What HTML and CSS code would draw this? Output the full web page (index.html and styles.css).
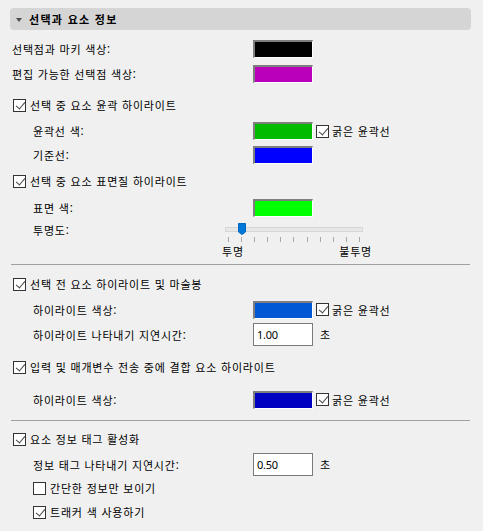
FILE: index.html
```html
<!DOCTYPE html>
<html lang="ko">
<head>
<meta charset="utf-8">
<title>선택과 요소 정보</title>
<link rel="stylesheet" href="styles.css">
</head>
<body>
<div class="panel">
  <div class="header"><span class="arrow"></span><span class="title">선택과 요소 정보</span></div>

  <div class="row tall mt6"><span class="label">선택점과 마키 색상:</span><span class="swatch" style="background:#000000"></span></div>
  <div class="row tall"><span class="label">편집 가능한 선택점 색상:</span><span class="swatch" style="background:#bb00bb"></span></div>

  <div class="check mt7"><span class="box on"></span><span>선택 중 요소 윤곽 하이라이트</span></div>
  <div class="row mt2"><span class="label sub">윤곽선 색:</span><span class="swatch" style="background:#00bb00"></span><span class="check inline"><span class="box on"></span><span>굵은 윤곽선</span></span></div>
  <div class="row"><span class="label sub">기준선:</span><span class="swatch" style="background:#0000ff"></span></div>

  <div class="check mt2"><span class="box on"></span><span>선택 중 요소 표면질 하이라이트</span></div>
  <div class="row tall mt2"><span class="label sub">표면 색:</span><span class="swatch" style="background:#00ff00"></span></div>
  <div class="slider-row mt3">
    <span class="label sub slabel">투명도:</span>
    <div class="slider">
      <div class="track-wrap"><div class="track"></div><div class="thumb"><svg width="8" height="12" viewBox="0 0 8 12"><path d="M0.5 0.5 H7.5 V9 L4 11.5 L0.5 9 Z" fill="#0078d7" stroke="#0067c0" stroke-width="1"/></svg></div></div>
      <div class="ticks"><i></i><i></i><i></i><i></i><i></i><i></i><i></i><i></i><i></i><i></i><i></i></div>
      <div class="slabels"><span>투명</span><span>불투명</span></div>
    </div>
  </div>

  <div class="sep mt6"></div>

  <div class="check mt7"><span class="box on"></span><span>선택 전 요소 하이라이트 및 마술봉</span></div>
  <div class="row tall mt1"><span class="label sub">하이라이트 색상:</span><span class="swatch" style="background:#0058d4"></span><span class="check inline"><span class="box on"></span><span>굵은 윤곽선</span></span></div>
  <div class="row tall"><span class="label sub">하이라이트 나타내기 지연시간:</span><span class="field">1.00</span><span class="unit">초</span></div>

  <div class="check mt8"><span class="box on"></span><span>입력 및 매개변수 전송 중에 결합 요소 하이라이트</span></div>
  <div class="row tall mt8"><span class="label sub">하이라이트 색상:</span><span class="swatch" style="background:#0000c0"></span><span class="check inline"><span class="box on"></span><span>굵은 윤곽선</span></span></div>

  <div class="sep mt8"></div>

  <div class="check mt6"><span class="box on"></span><span>요소 정보 태그 활성화</span></div>
  <div class="row short mt2"><span class="label sub">정보 태그 나타내기 지연시간:</span><span class="field">0.50</span><span class="unit">초</span></div>
  <div class="check sub"><span class="box"></span><span>간단한 정보만 보이기</span></div>
  <div class="check sub"><span class="box on"></span><span>트래커 색 사용하기</span></div>
</div>
</body>
</html>
```
FILE: styles.css
```css
* { box-sizing: border-box; }
html, body { margin: 0; padding: 0; }
body {
  background: #f0f0f0;
  font-family: "Noto Sans CJK KR", "Noto Sans", sans-serif;
  font-size: 11px;
  letter-spacing: 0.8px;
  color: #000;
  width: 483px;
  height: 531px;
  overflow: hidden;
}
.panel { padding: 8px 12px 0 10px; }

.header {
  height: 22px;
  background: #d5d5d5;
  border-radius: 4px;
  display: flex;
  align-items: center;
  padding-left: 6px;
  gap: 7px;
}
.arrow {
  width: 0; height: 0;
  border-left: 3.5px solid transparent;
  border-right: 3.5px solid transparent;
  border-top: 4px solid #4d4d4d;
  margin-top: 1px;
}
.title { font-weight: bold; letter-spacing: 1.3px; }

.row {
  display: grid;
  grid-template-columns: 243px auto auto auto;
  justify-content: start;
  align-items: center;
  height: 24px;
}
.row.tall { height: 25px; }
.row.short { height: 23px; }
.label { padding-left: 2px; white-space: nowrap; }
.label.sub { padding-left: 23px; }

.swatch {
  width: 60px;
  height: 18px;
  border-style: solid;
  border-width: 2px 1px 1px 2px;
  border-color: #7e7e7e #ffffff #ffffff #7e7e7e;
}
.field {
  width: 60px;
  height: 23px;
  border: 1px solid #7a7a7a;
  background: #fff;
  font-family: "Noto Sans", sans-serif;
  font-size: 11px;
  line-height: 21px;
  padding-left: 3px;
  letter-spacing: -0.3px;
}
.unit { margin-left: 7px; margin-top: -2px; }

.check {
  display: flex;
  align-items: center;
  gap: 4px;
  height: 24px;
  padding-left: 3px;
  white-space: nowrap;
}
.check.sub { padding-left: 23px; }
.check.inline { height: auto; padding-left: 3px; gap: 3px; }

.box {
  width: 13px;
  height: 13px;
  border: 1px solid #333;
  background: #fff;
  flex: none;
  position: relative;
}
.box.on::after {
  content: "";
  position: absolute;
  left: 3px;
  top: 0px;
  width: 4px;
  height: 8px;
  border-right: 1.3px solid #444;
  border-bottom: 1.3px solid #444;
  transform: rotate(40deg);
  transform-origin: 50% 50%;
  margin-left: 0.5px;
}

.slider-row {
  display: grid;
  grid-template-columns: 212px 152px;
  align-items: start;
}
.slabel { line-height: 14px; }
.slider { width: 152px; }
.track-wrap {
  position: relative;
  height: 13px;
  margin-left: 3px;
  width: 138px;
}
.track {
  position: absolute;
  left: 0; right: 0;
  top: 4px;
  height: 5px;
  background: #e7e7e7;
  border: 1px solid #d6d6d6;
}
.thumb {
  position: absolute;
  left: 13px;
  top: 0px;
  width: 8px;
  height: 12px;
}
.thumb svg { display: block; }
.ticks {
  display: flex;
  justify-content: space-between;
  margin-left: 6px;
  width: 132px;
  margin-top: 1px;
  height: 5px;
}
.ticks i { display: block; width: 1px; height: 5px; background: #a8a8a8; }
.slabels {
  display: flex;
  justify-content: space-between;
  margin-top: 2px;
  line-height: 14px;
  width: 150px;
}

.sep {
  height: 1px;
  background: #a0a0a0;
  margin-left: 1px;
  margin-right: 1px;
}

.mt1 { margin-top: 1px; }
.mt2 { margin-top: 2px; }
.mt3 { margin-top: 3px; }
.mt6 { margin-top: 6px; }
.mt7 { margin-top: 7px; }
.mt8 { margin-top: 8px; }
```
